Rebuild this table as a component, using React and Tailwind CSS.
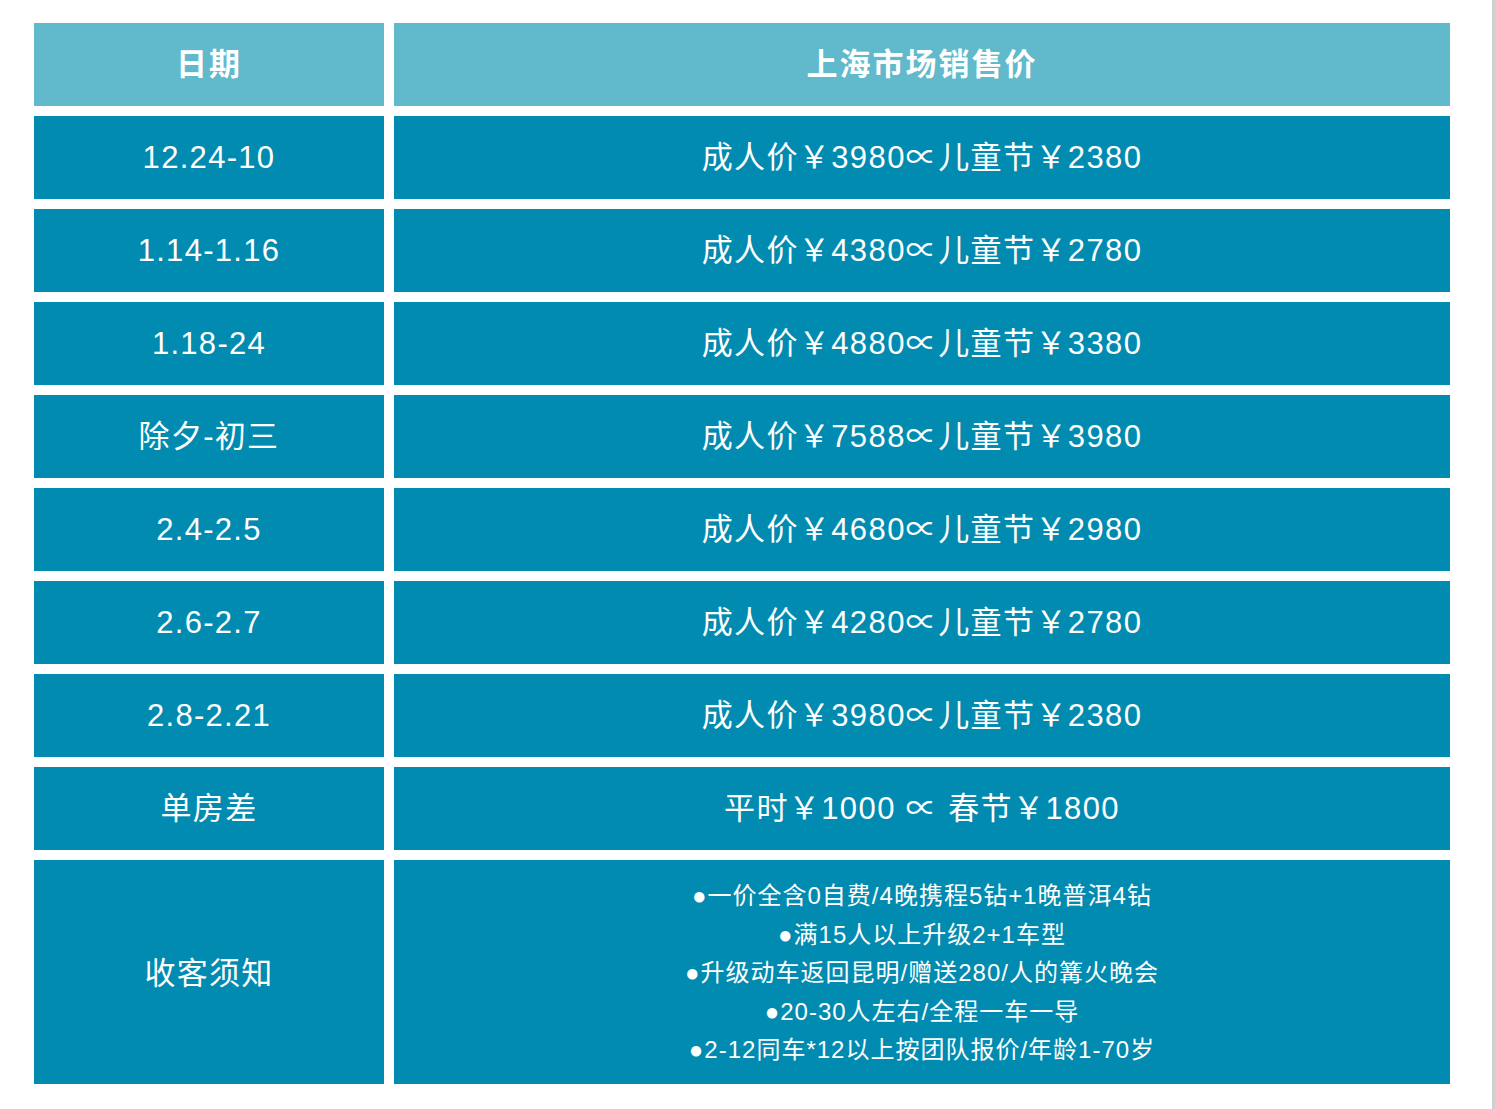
const rows = [
  { date: '12.24-10', price: '成人价￥3980∝儿童节￥2380' },
  { date: '1.14-1.16', price: '成人价￥4380∝儿童节￥2780' },
  { date: '1.18-24', price: '成人价￥4880∝儿童节￥3380' },
  { date: '除夕-初三', price: '成人价￥7588∝儿童节￥3980' },
  { date: '2.4-2.5', price: '成人价￥4680∝儿童节￥2980' },
  { date: '2.6-2.7', price: '成人价￥4280∝儿童节￥2780' },
  { date: '2.8-2.21', price: '成人价￥3980∝儿童节￥2380' },
  { date: '单房差', price: '平时￥1000 ∝ 春节￥1800' },
];

const notes = [
  '●一价全含0自费/4晚携程5钻+1晚普洱4钻',
  '●满15人以上升级2+1车型',
  '●升级动车返回昆明/赠送280/人的篝火晚会',
  '●20-30人左右/全程一车一导',
  '●2-12同车*12以上按团队报价/年龄1-70岁',
];

const font = { fontFamily: '"Liberation Sans", "Noto Sans CJK SC", sans-serif' };

const App = () => {
  return (
    <div className="w-full h-[1109px] flex bg-white overflow-hidden" style={font}>
      <div className="flex-1 pt-[23px] pl-[34px]">
        <div className="w-[1416px] flex flex-col gap-[10px] text-white">
          {/* header */}
          <div className="flex gap-[10px] h-[83px]">
            <div className="w-[350px] bg-[#61b9cc] flex items-center justify-center text-[31px] font-bold tracking-[2px] pt-[2px]">
              日期
            </div>
            <div className="flex-1 bg-[#61b9cc] flex items-center justify-center text-[31px] font-bold tracking-[2px] pt-[2px]">
              上海市场销售价
            </div>
          </div>

          {rows.map((r) => (
            <div key={r.date} className="flex gap-[10px] h-[83px]">
              <div className="w-[350px] bg-[#018bb0] flex items-center justify-center text-[31px] tracking-[1.3px] pt-[2px]">
                {r.date}
              </div>
              <div className="flex-1 bg-[#018bb0] flex items-center justify-center text-[31px] tracking-[1.4px] whitespace-pre pt-[2px]">
                {r.price}
              </div>
            </div>
          ))}

          {/* notes */}
          <div className="flex gap-[10px] h-[224px]">
            <div className="w-[350px] bg-[#018bb0] flex items-center justify-center text-[31px] tracking-[1.3px] pt-[4px]">
              收客须知
            </div>
            <div className="flex-1 bg-[#018bb0] flex flex-col items-center justify-center text-[24px] leading-[38.5px] tracking-[1px] pt-[3px]">
              {notes.map((n) => (
                <div key={n}>{n}</div>
              ))}
            </div>
          </div>
        </div>
      </div>
      <div className="w-[3px] h-full bg-[#cfcfcf]" />
    </div>
  );
};

export default App;
